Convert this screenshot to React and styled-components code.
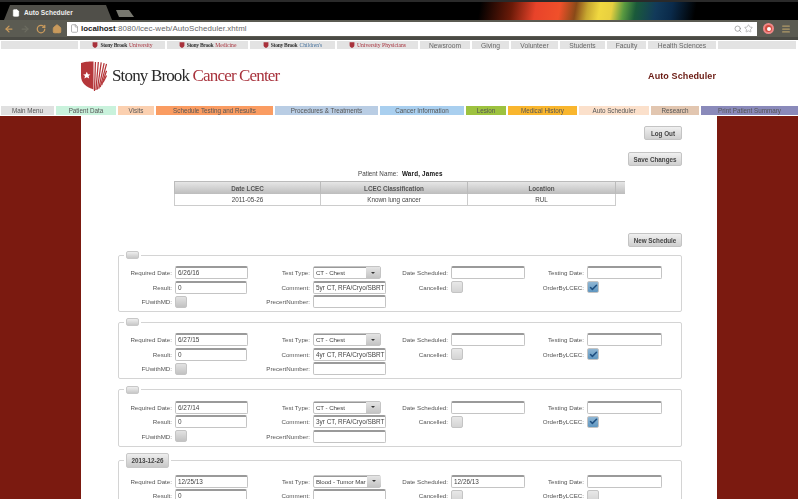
import React from "react";
import styled, { createGlobalStyle } from "styled-components";
import { ArrowLeft, ArrowRight, RotateCw, Home, Search, Star, File, Menu as MenuIcon, Check } from "lucide-react";

const Global = createGlobalStyle`
  html, body { margin: 0; padding: 0; background: #fff; }
  body { font-family: "Liberation Sans", Arial, sans-serif; color: #333; overflow: hidden; }
  * { box-sizing: border-box; }
`;
const Page = styled.div`
  width: 798px; height: 499px; overflow: hidden; display: flex; flex-direction: column;
  filter: blur(0.4px);
`;
const TabStrip = styled.div`
  height: 20px; flex: none; display: flex; align-items: flex-end; padding-left: 4px;
  background:
    linear-gradient(100deg, #000 60%, #6a1a08 64%, #e8432a 67%, #f0502a 70%, #8a4a18 72%, #c8a830 73.5%, #f0d840 75%, #e8d040 76.5%, #5a9a40 78%, #1a5a3a 79.5%, #123a5a 82%, #0a2a4a 84%, #000 87%);
  border-top: 2px solid #2a2a2a;
`;
const Tab = styled.div`
  width: 108px; height: 15px; background: #504f49;
  clip-path: polygon(0 100%, 6px 0, 102px 0, 100% 100%);
  display: flex; align-items: center; gap: 4px; padding-left: 8px;
  color: #eee; font-size: 6.6px; font-weight: bold;
`;
const GhostTab = styled.div`
  width: 18px; height: 7px; margin: 0 0 3px 4px; background: #77776f;
  clip-path: polygon(0 0, 13px 0, 100% 100%, 3px 100%);
`;
const Toolbar = styled.div`
  height: 17px; flex: none; display: flex; align-items: center; background: #5b5b52; padding-left: 4px; gap: 6px;
  border-bottom: 3px solid #4a4a44; box-sizing: content-box;
`;
const Address = styled.div`
  width: 294px; flex: 1 1 auto; height: 14px; background: #fff; display: flex; align-items: center; gap: 2px;
  padding: 0 4px 0 3px; color: #666; font-size: 7.9px; letter-spacing: .1px; margin-left: -1px;
  b { color: #222; font-weight: bold; letter-spacing: 0; }
  span { flex: 1; }
`;
const Tools = styled.div`
  width: 32px; flex: none; display: flex; align-items: center; gap: 7px; margin-right: 3px;
`;
const Rec = styled.div`
  width: 11px; height: 11px; border-radius: 50%; background: #d04a3c; border: 2px solid #e88; 
  display: flex; align-items: center; justify-content: center;
  &::after { content: ""; width: 4px; height: 4px; border-radius: 50%; background: #fff; }
`;
const NavBar = styled.div`
  height: 8px; flex: none; margin-top: 1px; display: flex; padding-left: 1px; gap: 2px; color: #666;
`;
const NavItem = styled.div`
  width: ${p => p.$w}px; background: #e3e3e3; display: flex; align-items: center; justify-content: center; gap: 2px;
  white-space: nowrap; color: ${p => p.$color || "#666"};
  font-family: ${p => p.$serif ? '"Liberation Serif", serif' : "inherit"};
  font-size: ${p => p.$serif ? "5.6px" : "6.7px"};
  em { font-style: normal; color: #333; font-weight: bold; letter-spacing: -.3px; }
`;
const Header = styled.div`
  height: 57px; flex: none; display: flex; align-items: center; padding: 0 82px 3px 81px; justify-content: space-between;
`;
const Logo = styled.div`
  display: flex; align-items: center; gap: 5px; font-family: "Liberation Serif", serif; font-size: 17px; letter-spacing: -.84px; color: #2b2b2b;
  span { color: #a8323c; }
`;
const PageTitle = styled.h1`
  margin: 0; font-size: 9px; font-weight: bold; color: #6a1a12; letter-spacing: .1px;
`;
const Menu = styled.div`
  height: 9px; flex: none; display: flex; padding-left: 1px; gap: 2px; font-size: 6.3px; color: #555;
`;
const MenuItem = styled.div`
  width: ${p => p.$w}px; background: ${p => p.$bg}; display: flex; align-items: center; justify-content: center; white-space: nowrap;
`;
const Body = styled.div`
  flex: 1; min-height: 0; margin-top: 1px; display: grid; grid-template-columns: 81px 636px 81px;
`;
const Side = styled.div` background: #7b1a10; `;
const Main = styled.main`
  padding-top: 10px; background: #fff; min-width: 0;
`;
const BtnRow = styled.div`
  display: flex; justify-content: flex-end; padding-right: 35px; margin-top: ${p => p.$mt || 0}px; margin-bottom: ${p => p.$mb || 0}px;
`;
const Btn = styled.button`
  width: ${p => p.$w}px; height: 14px; padding: 0; border: 1px solid #c4c4c4; border-radius: 2px;
  background: linear-gradient(#f0f0f0, #cfcfcf); font: bold 6.3px "Liberation Sans", sans-serif; color: #444; white-space: nowrap;
`;
const Patient = styled.div`
  height: 7px; margin-top: 4px; display: flex; justify-content: flex-start; gap: 4px; padding-left: 277px; font-size: 6.3px; line-height: 7px; color: #444;
  b { color: #111; letter-spacing: .2px; }
`;
const Table = styled.div`
  margin: 4px 0 0 93px; width: 451px; font-size: 6.3px; color: #444;
`;
const THead = styled.div`
  display: grid; grid-template-columns: 147px 147px 148px 9px; height: 13px;
  background: linear-gradient(#e6e6e6, #bdbdbd);
  border-top: 1px solid #bbb;
`;
const Th = styled.div`
  display: flex; align-items: center; justify-content: center; font-weight: bold; color: #555; border-right: 1px solid #bbb; border-left: ${p => p.$first ? "1px solid #bbb" : 0};
  &:last-child { border-right: 0; opacity: .8; }
`;
const TRow = styled.div`
  display: grid; grid-template-columns: 147px 147px 148px; width: 442px; height: 12px; border-bottom: 1px solid #ccc;
`;
const Td = styled.div`
  display: flex; align-items: center; justify-content: center; border-right: 1px solid #ccc; border-left: ${p => p.$first ? "1px solid #ccc" : 0};
`;
const Schedule = styled.fieldset`
  margin: 0 0 6.33px 37px; width: 564px; padding: 7px 0 3px; border: 1px solid #d4d4d4; border-radius: 2px; min-width: 0;
`;
const Legend = styled.legend`
  margin-left: 5px; padding: 0 2px; height: ${p => p.$big ? 15 : 8}px; display: block;
`;
const LegendBtn = styled.div`
  height: 100%; min-width: 13px; width: ${p => p.$big ? "43px" : "13px"}; border: 1px solid #c8c8c8; border-radius: 2px;
  background: linear-gradient(#eee, #c8c8c8); font-size: 6.3px; font-weight: bold; color: #444;
  display: flex; align-items: center; justify-content: center;
`;
const Fields = styled.div`
  display: grid; align-items: center; grid-auto-rows: 13px; row-gap: 1.5px;
  grid-template-columns: 56px 76px 62px 77px 61px 77px 59px 76px;
  font-size: 6.2px; color: #555;
`;
const Lab = styled.label`
  text-align: right; padding-right: 3px; white-space: nowrap;
`;
const Cell = styled.div` min-width: 0; `;
const Input = styled.div`
  width: ${p => p.$w || 73}px; height: 13px; background: #fff; border: 1px solid #c4c4c4; border-top: 2px solid #9a9a9a; border-radius: 2px;
  padding: 0 2px; font-size: 6.4px; line-height: 10px; color: #444; white-space: nowrap; overflow: hidden;
`;
const Select = styled.div`
  width: 68px; height: 13px; display: flex; border: 1px solid #c4c4c4; border-radius: 2px; background: #fff; font-size: 6.2px; color: #444;
`;
const SelectText = styled.div` flex: 1; padding: 0 1px 0 2px; line-height: 10px; white-space: nowrap; border-top: 1px solid #999; letter-spacing: -.1px; `;
const SelectArrow = styled.div`
  width: 14px; flex: none; background: linear-gradient(#e4e4e4, #c4c4c4); display: flex; align-items: center; justify-content: center;
  &::after { content: ""; border: 2px solid transparent; border-top: 2.5px solid #333; border-bottom: 0; }
`;
const Box = styled.div`
  width: 12px; height: 12px; border-radius: 2px; border: 1px solid #c4c4c4; display: flex; align-items: center; justify-content: center;
  background: ${p => p.$checked ? "linear-gradient(#8fb6d4, #5f96c0)" : p.$light ? "linear-gradient(#e8e8e8, #d4d4d4)" : "linear-gradient(#e2e2e2, #c2c2c2)"};
`;

const navs = [
  { w: 77 },
  { w: 85, a: "Stony Brook", b: "University", c: "#a8323c", shield: 1 },
  { w: 81, a: "Stony Brook", b: "Medicine", c: "#a8323c", shield: 1 },
  { w: 85, a: "Stony Brook", b: "Children's", c: "#44709c", shield: 1 },
  { w: 81, a: "", b: "University Physicians", c: "#a8323c", shield: 1 },
  { w: 50, t: "Newsroom" }, { w: 37, t: "Giving" }, { w: 47, t: "Volunteer" },
  { w: 45, t: "Students" }, { w: 39, t: "Faculty" }, { w: 68, t: "Health Sciences" }, { w: 78 },
];
const menus = [
  ["Main Menu", 53, "#e0e0e0"], ["Patient Data", 60, "#c9f2dc"], ["Visits", 36, "#fbd0b0"],
  ["Schedule Testing and Results", 117, "#fa9c62"], ["Procedures & Treatments", 103, "#b9cde4"],
  ["Cancer Information", 84, "#a9cfef"], ["Lesion", 40, "#9dc23f"], ["Medical History", 69, "#f9b62e"],
  ["Auto Scheduler", 70, "#fbe0cb"], ["Research", 48, "#e2c6b0"], ["Print Patient Summary", 97, "#8a8aba"],
];
const rows = [
  { req: "6/26/16", test: "CT - Chest", com: "5yr CT, RFA/Cryo/SBRT", ord: true },
  { req: "6/27/15", test: "CT - Chest", com: "4yr CT, RFA/Cryo/SBRT", ord: true },
  { req: "6/27/14", test: "CT - Chest", com: "3yr CT, RFA/Cryo/SBRT", ord: true },
  { legend: "2013-12-26", req: "12/25/13", test: "Blood - Tumor Mar", com: "", sched: "12/26/13", ord: false },
];

const Shield = ({ s = 6 }) => (
  <svg width={s} height={s} viewBox="0 0 10 10"><path d="M1 0.5h8v5c0 2.5-2 3.5-4 4.5C3 9 1 8 1 5.5z" fill="#a8323c" /></svg>
);
const BigShield = () => (
  <svg width="26" height="31" viewBox="0 0 27 32">
    <path d="M0 2 C6 0.5 9 0.5 13 0.5 L13 29.5 C6 27 0 24 0 15z" fill="#b5373a" />
    <path d="M6 11 l1.2 2.6 2.6.2-2 1.7.7 2.7-2.5-1.4-2.5 1.4.7-2.7-2-1.7 2.6-.2z" fill="#fff" />
    <g stroke="#b5373a" strokeWidth="1.3" fill="none">
      <path d="M14 31 L15 1" /><path d="M15.5 30 L18 1" /><path d="M17 29.5 L21 1.4" />
      <path d="M18.5 28.5 L24 2" /><path d="M20 27 L26.5 3" /><path d="M21.5 25 L26.5 10" /><path d="M23 22 L26.5 15" />
    </g>
  </svg>
);
const tan = "#c99a5c";

export default function App() {
  return (
    <Page>
      <Global />
      <TabStrip>
        <Tab><File size={8} fill="#fff" stroke="#fff" />Auto Scheduler</Tab>
        <GhostTab />
      </TabStrip>
      <Toolbar>
        <ArrowLeft size={10} color={tan} strokeWidth={3} />
        <ArrowRight size={10} color="#6c6c60" strokeWidth={3} />
        <RotateCw size={10} color={tan} strokeWidth={3} />
        <Home size={10} color={tan} fill={tan} />
        <Address>
          <File size={9} color="#999" />
          <span><b>localhost</b>:8080/lcec-web/AutoScheduler.xhtml</span>
          <Search size={8} color="#888" />
          <Star size={9} color="#aaa" />
        </Address>
        <Tools>
          <Rec />
          <MenuIcon size={10} color="#b09a68" strokeWidth={3} />
        </Tools>
      </Toolbar>
      <NavBar>
        {navs.map((n, i) => n.shield ? (
          <NavItem key={i} $w={n.w} $serif $color={n.c}><Shield />{n.a && <em>{n.a}</em>}{n.b}</NavItem>
        ) : <NavItem key={i} $w={n.w}>{n.t}</NavItem>)}
      </NavBar>
      <Header>
        <Logo>
          <BigShield />
          <div>Stony Brook <span>Cancer Center</span></div>
        </Logo>
        <PageTitle>Auto Scheduler</PageTitle>
      </Header>
      <Menu>
        {menus.map(([t, w, bg]) => <MenuItem key={t} $w={w} $bg={bg}>{t}</MenuItem>)}
      </Menu>
      <Body>
        <Side />
        <Main>
          <BtnRow $mb={12}><Btn $w={38}>Log Out</Btn></BtnRow>
          <BtnRow><Btn $w={54}>Save Changes</Btn></BtnRow>
          <Patient>Patient Name: <b>Ward, James</b></Patient>
          <Table>
            <THead>
              <Th $first>Date LCEC</Th><Th>LCEC Classification</Th><Th>Location</Th><Th />
            </THead>
            <TRow>
              <Td $first>2011-05-26</Td><Td>Known lung cancer</Td><Td>RUL</Td>
            </TRow>
          </Table>
          <BtnRow $mt={27} $mb={4}><Btn $w={54}>New Schedule</Btn></BtnRow>
          {rows.map((r, i) => (
            <Schedule key={i}>
              <Legend $big={!!r.legend}><LegendBtn $big={!!r.legend}>{r.legend}</LegendBtn></Legend>
              <Fields>
                <Lab>Required Date:</Lab><Cell><Input>{r.req}</Input></Cell>
                <Lab>Test Type:</Lab><Cell><Select><SelectText>{r.test}</SelectText><SelectArrow /></Select></Cell>
                <Lab>Date Scheduled:</Lab><Cell><Input $w={74}>{r.sched}</Input></Cell>
                <Lab>Testing Date:</Lab><Cell><Input $w={75} /></Cell>

                <Lab>Result:</Lab><Cell><Input $w={72}>0</Input></Cell>
                <Lab>Comment:</Lab><Cell><Input>{r.com}</Input></Cell>
                <Lab>Cancelled:</Lab><Cell><Box $light /></Cell>
                <Lab>OrderByLCEC:</Lab><Cell><Box $checked={r.ord} $light={!r.ord}>{r.ord && <Check size={9} color="#1f4f80" strokeWidth={4} />}</Box></Cell>

                <Lab>FUwithMD:</Lab><Cell><Box /></Cell>
                <Lab>PrecertNumber:</Lab><Cell><Input /></Cell>
              </Fields>
            </Schedule>
          ))}
        </Main>
        <Side />
      </Body>
    </Page>
  );
}
